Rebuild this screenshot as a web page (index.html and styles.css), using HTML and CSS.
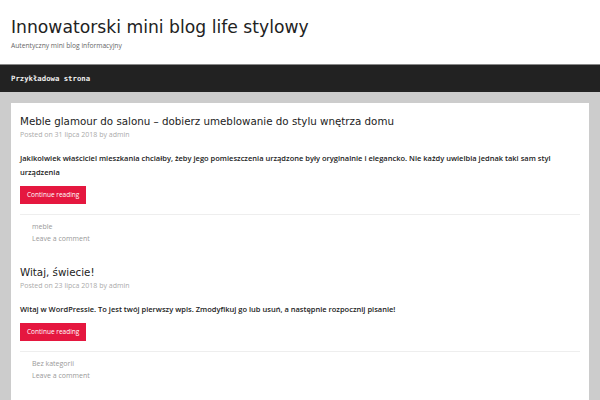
FILE: index.html
```html
<!DOCTYPE html>
<html>
<head>
<meta charset="utf-8">
<title>Innowatorski mini blog life stylowy</title>
<link rel="stylesheet" href="styles.css">
</head>
<body>
<header class="site-header">
  <h1 class="site-title">Innowatorski mini blog life stylowy</h1>
  <p class="site-description">Autentyczny mini blog informacyjny</p>
</header>

<nav class="main-nav">
  <a href="#">Przykładowa strona</a>
</nav>

<div class="site-content">
  <main class="content-area">
    <article class="post">
      <h2 class="entry-title">Meble glamour do salonu – dobierz umeblowanie do stylu wnętrza domu</h2>
      <div class="entry-meta">Posted on <a href="#">31 lipca 2018</a> by <a href="#">admin</a></div>
      <div class="entry-summary">
        <p>Jakikolwiek właściciel mieszkania chciałby, żeby jego pomieszczenia urządzone były oryginalnie i elegancko. Nie każdy uwielbia jednak taki sam styl urządzenia</p>
        <a class="read-more" href="#">Continue reading</a>
      </div>
      <footer class="entry-footer">
        <span>meble</span>
        <span>Leave a comment</span>
      </footer>
    </article>

    <article class="post">
      <h2 class="entry-title">Witaj, świecie!</h2>
      <div class="entry-meta">Posted on <a href="#">23 lipca 2018</a> by <a href="#">admin</a></div>
      <div class="entry-summary">
        <p>Witaj w WordPressie. To jest twój pierwszy wpis. Zmodyfikuj go lub usuń, a następnie rozpocznij pisanie!</p>
        <a class="read-more" href="#">Continue reading</a>
      </div>
      <footer class="entry-footer">
        <span>Bez kategorii</span>
        <span>Leave a comment</span>
      </footer>
    </article>
  </main>
</div>
</body>
</html>
```

FILE: styles.css
```css
body {
  margin: 0;
  background-color: #cccccc;
  color: #222;
  font-family: "Open Sans", sans-serif;
}

a {
  color: inherit;
  text-decoration: none;
}

.site-header {
  background-color: white;
  padding: 16px 11px 13px;
  border-bottom: 1px solid #888;
}

.site-title {
  margin: 0;
  font-family: "DejaVu Sans", sans-serif;
  font-weight: normal;
  font-size: 17.2px;
  line-height: 22px;
  color: #222;
}

.site-description {
  margin: 3px 0 0;
  font-size: 6.7px;
  line-height: 10px;
  color: #666;
}

.main-nav {
  background-color: #222222;
  height: 27px;
  padding: 0 11px;
  display: flex;
  align-items: center;
}

.main-nav a {
  color: #eee;
  font-family: "DejaVu Sans Mono", monospace;
  font-weight: bold;
  font-size: 7.3px;
}

.site-content {
  padding: 11px 11px 0;
}

.content-area {
  background-color: white;
  padding: 10px 9px 10px;
}

.post {
  margin-bottom: 19px;
}

.entry-title {
  margin: 0;
  font-family: "DejaVu Sans", sans-serif;
  font-weight: normal;
  font-size: 10.3px;
  line-height: 16px;
  color: #222;
}

.entry-meta {
  font-size: 7px;
  color: #aaa;
  line-height: 12px;
}

.entry-summary {
  display: flex;
  flex-direction: column;
  align-items: flex-start;
}

.entry-summary p {
  margin: 10px 0 7px;
  font-size: 7.5px;
  font-weight: 600;
  line-height: 14px;
}

.read-more {
  background-color: #e5173f;
  color: white;
  font-size: 6.5px;
  line-height: 18px;
  padding: 0 7px;
}

.entry-footer {
  margin-top: 10px;
  border-top: 1px solid #eee;
  padding: 6px 12px 0;
  display: flex;
  flex-direction: column;
  font-size: 7px;
  line-height: 12px;
  color: #999;
}
```
